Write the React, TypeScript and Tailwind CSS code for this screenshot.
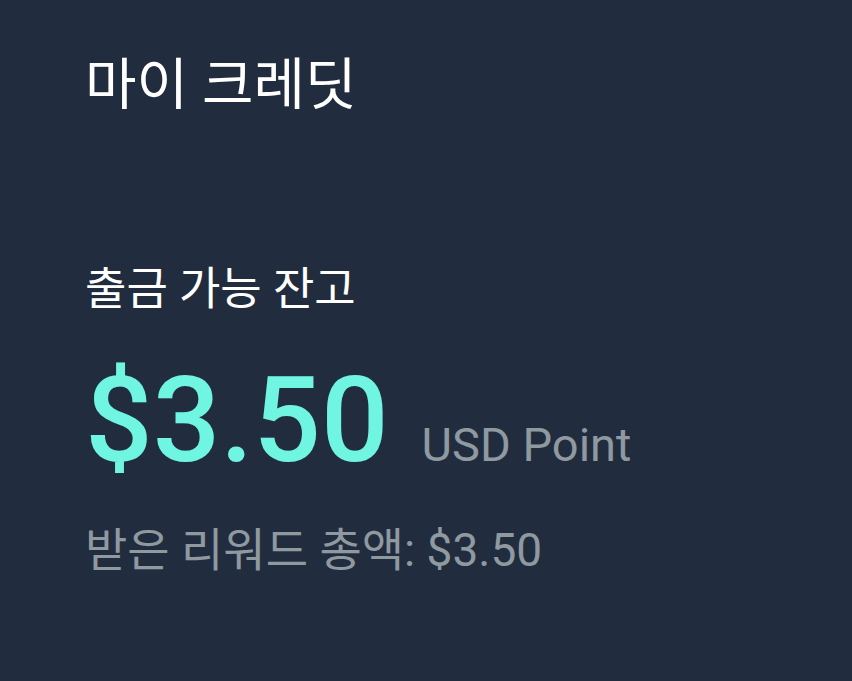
export default function App() {
  return (
    <div
      className="w-[852px] h-[681px] bg-[#222c3f] text-white px-[85px] pt-[48px]"
      style={{ fontFamily: 'Roboto, "Noto Sans CJK KR", sans-serif' }}
    >
      <h1 className="text-[56px] leading-[74px] font-normal">마이 크레딧</h1>
      <div className="mt-[143px] text-[45px] leading-[50px]">출금 가능 잔고</div>
      <div className="mt-[46px] flex items-baseline gap-[33px]">
        <span className="text-[119px] leading-[120px] font-medium text-[#6ff5e2]">$3.50</span>
        <span className="text-[47px] text-[#8e99a0]">USD Point</span>
      </div>
      <div className="mt-[44px] text-[46px] leading-[50px] text-[#8e99a0]">받은 리워드 총액: $3.50</div>
    </div>
  );
}
